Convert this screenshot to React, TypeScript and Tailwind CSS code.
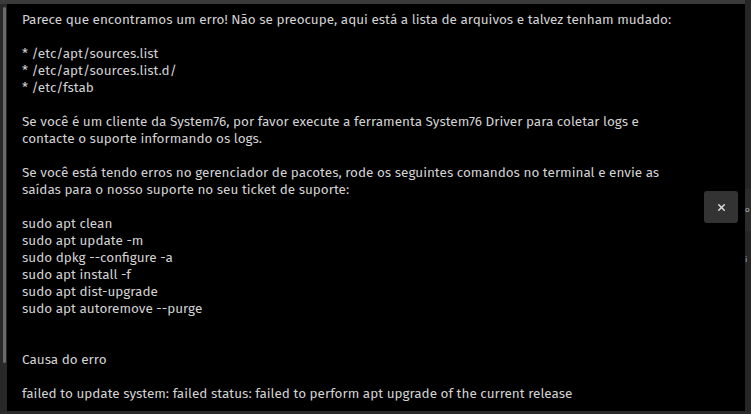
import { X } from "lucide-react";

const lines: string[] = [
  "Parece que encontramos um erro! Não se preocupe, aqui está a lista de arquivos e talvez tenham mudado:",
  "",
  "* /etc/apt/sources.list",
  "* /etc/apt/sources.list.d/",
  "* /etc/fstab",
  "",
  "Se você é um cliente da System76, por favor execute a ferramenta System76 Driver para coletar logs e",
  "contacte o suporte informando os logs.",
  "",
  "Se você está tendo erros no gerenciador de pacotes, rode os seguintes comandos no terminal e envie as",
  "saídas para o nosso suporte no seu ticket de suporte:",
  "",
  "sudo apt clean",
  "sudo apt update -m",
  "sudo dpkg --configure -a",
  "sudo apt install -f",
  "sudo apt dist-upgrade",
  "sudo apt autoremove --purge",
  "",
  "",
  "Causa do erro",
  "",
  "failed to update system: failed status: failed to perform apt upgrade of the current release",
];

const ErrorDialog = () => {
  return (
    <div className="w-[751px] h-[414px] bg-[#252525] flex flex-col overflow-hidden font-['Fira_Sans','Open_Sans',sans-serif]">
      {/* top edge of the window behind */}
      <div className="h-[4px] w-[745px] bg-[#3a3a3a] shrink-0" />

      <div className="flex flex-1 min-h-0">
        {/* scrollbar */}
        <div className="w-[7px] shrink-0 bg-[#282828] pt-[3px]">
          <div className="ml-[3px] w-[3px] h-[356px] rounded-full bg-[#6a6a6a]" />
        </div>

        {/* message body */}
        <div className="relative w-[738px] shrink-0 bg-black pl-[15px] pt-[7px]">
          {lines.map((line, i) => (
            <div key={i} className="h-[17px] text-[13.5px] leading-[17px] text-[#d2d2d2] whitespace-pre">
              {line}
            </div>
          ))}

          <button className="absolute left-[697px] top-[187px] w-[34px] h-[32px] rounded-[3px] bg-[#333333] flex items-center justify-center">
            <X className="w-[11px] h-[11px] text-[#d8d8d8]" strokeWidth={3.5} />
          </button>
        </div>

        {/* sliver of the window behind */}
        <div className="flex-1 bg-[#262626] flex flex-col text-[8px] text-[#b5b5b5] overflow-hidden">
          <div className="h-[185px]" />
          <div className="h-[42px] bg-[#2c2c2c] flex items-center leading-none">o</div>
          <div className="h-[24px]" />
          <div className="leading-[10px]">i</div>
        </div>
      </div>

      <div className="h-[3px] shrink-0 bg-[#2a2a2a]" />
    </div>
  );
};

export default function App() {
  return <ErrorDialog />;
}
